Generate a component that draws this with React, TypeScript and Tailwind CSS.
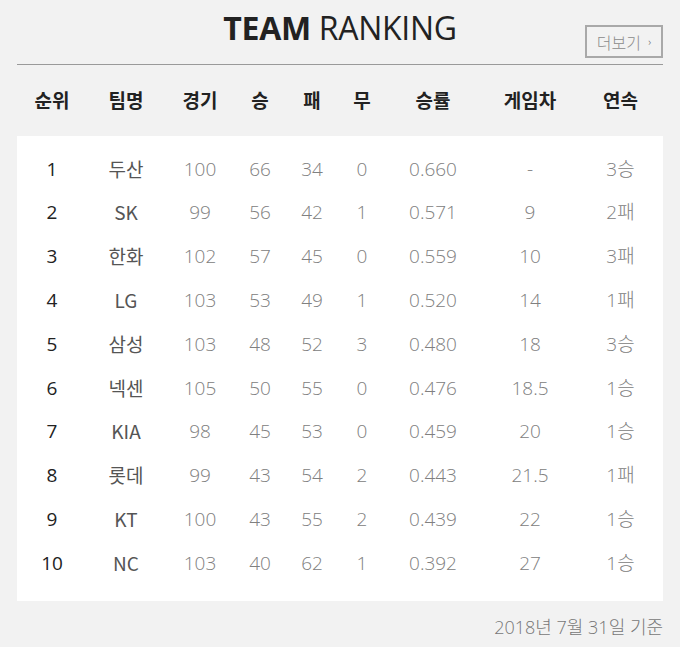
const cols = "grid grid-cols-[70px_78px_70px_50px_54px_46px_96px_98px_83px]";

const head = ["순위", "팀명", "경기", "승", "패", "무", "승률", "게임차", "연속"];

const rows = [
  ["1", "두산", "100", "66", "34", "0", "0.660", "-", "3승"],
  ["2", "SK", "99", "56", "42", "1", "0.571", "9", "2패"],
  ["3", "한화", "102", "57", "45", "0", "0.559", "10", "3패"],
  ["4", "LG", "103", "53", "49", "1", "0.520", "14", "1패"],
  ["5", "삼성", "103", "48", "52", "3", "0.480", "18", "3승"],
  ["6", "넥센", "105", "50", "55", "0", "0.476", "18.5", "1승"],
  ["7", "KIA", "98", "45", "53", "0", "0.459", "20", "1승"],
  ["8", "롯데", "99", "43", "54", "2", "0.443", "21.5", "1패"],
  ["9", "KT", "100", "43", "55", "2", "0.439", "22", "1승"],
  ["10", "NC", "103", "40", "62", "1", "0.392", "27", "1승"],
];

export default function App() {
  return (
    <div className="w-[680px] h-[647px] bg-[#f2f2f2] font-['Open_Sans','Noto_Sans_CJK_KR',sans-serif] px-[17px]">
      <div className="relative h-[65px] border-b border-[#9a9a9a]">
        <h1 className="pt-[6px] text-center text-[32px] leading-[44px] text-[#222] tracking-[-0.3px]">
          <span className="font-bold">TEAM</span> RANKING
        </h1>
        <button className="absolute right-0 top-[25px] w-[78px] h-[33px] border-2 border-[#a9a9a9] flex items-center justify-center gap-[7px] text-[16px] text-[#8a8a8a] font-light font-['Noto_Sans_CJK_KR',sans-serif]">
          더보기
          <span className="text-[11px] text-[#666]">›</span>
        </button>
      </div>

      <div className={`${cols} h-[71px] items-center text-center text-[19px] font-semibold text-[#222] font-['Noto_Sans_CJK_KR',sans-serif]`}>
        {head.map((h) => (
          <div key={h}>{h}</div>
        ))}
      </div>

      <div className="bg-white pt-[11px] pb-[16px]">
        {rows.map((r) => (
          <div key={r[0]} className={`${cols} h-[43.8px] items-center text-center text-[19px]`}>
            <div className="text-[#222]">{r[0]}</div>
            <div className="text-[#555] font-['Noto_Sans_CJK_KR',sans-serif]">{r[1]}</div>
            {r.slice(2).map((c, i) => (
              <div key={i} className="text-[#808080] font-light">
                {c}
              </div>
            ))}
          </div>
        ))}
      </div>

      <div className="pt-[13px] text-right text-[18px] text-[#777] font-light">
        2018년 7월 31일 기준
      </div>
    </div>
  );
}
